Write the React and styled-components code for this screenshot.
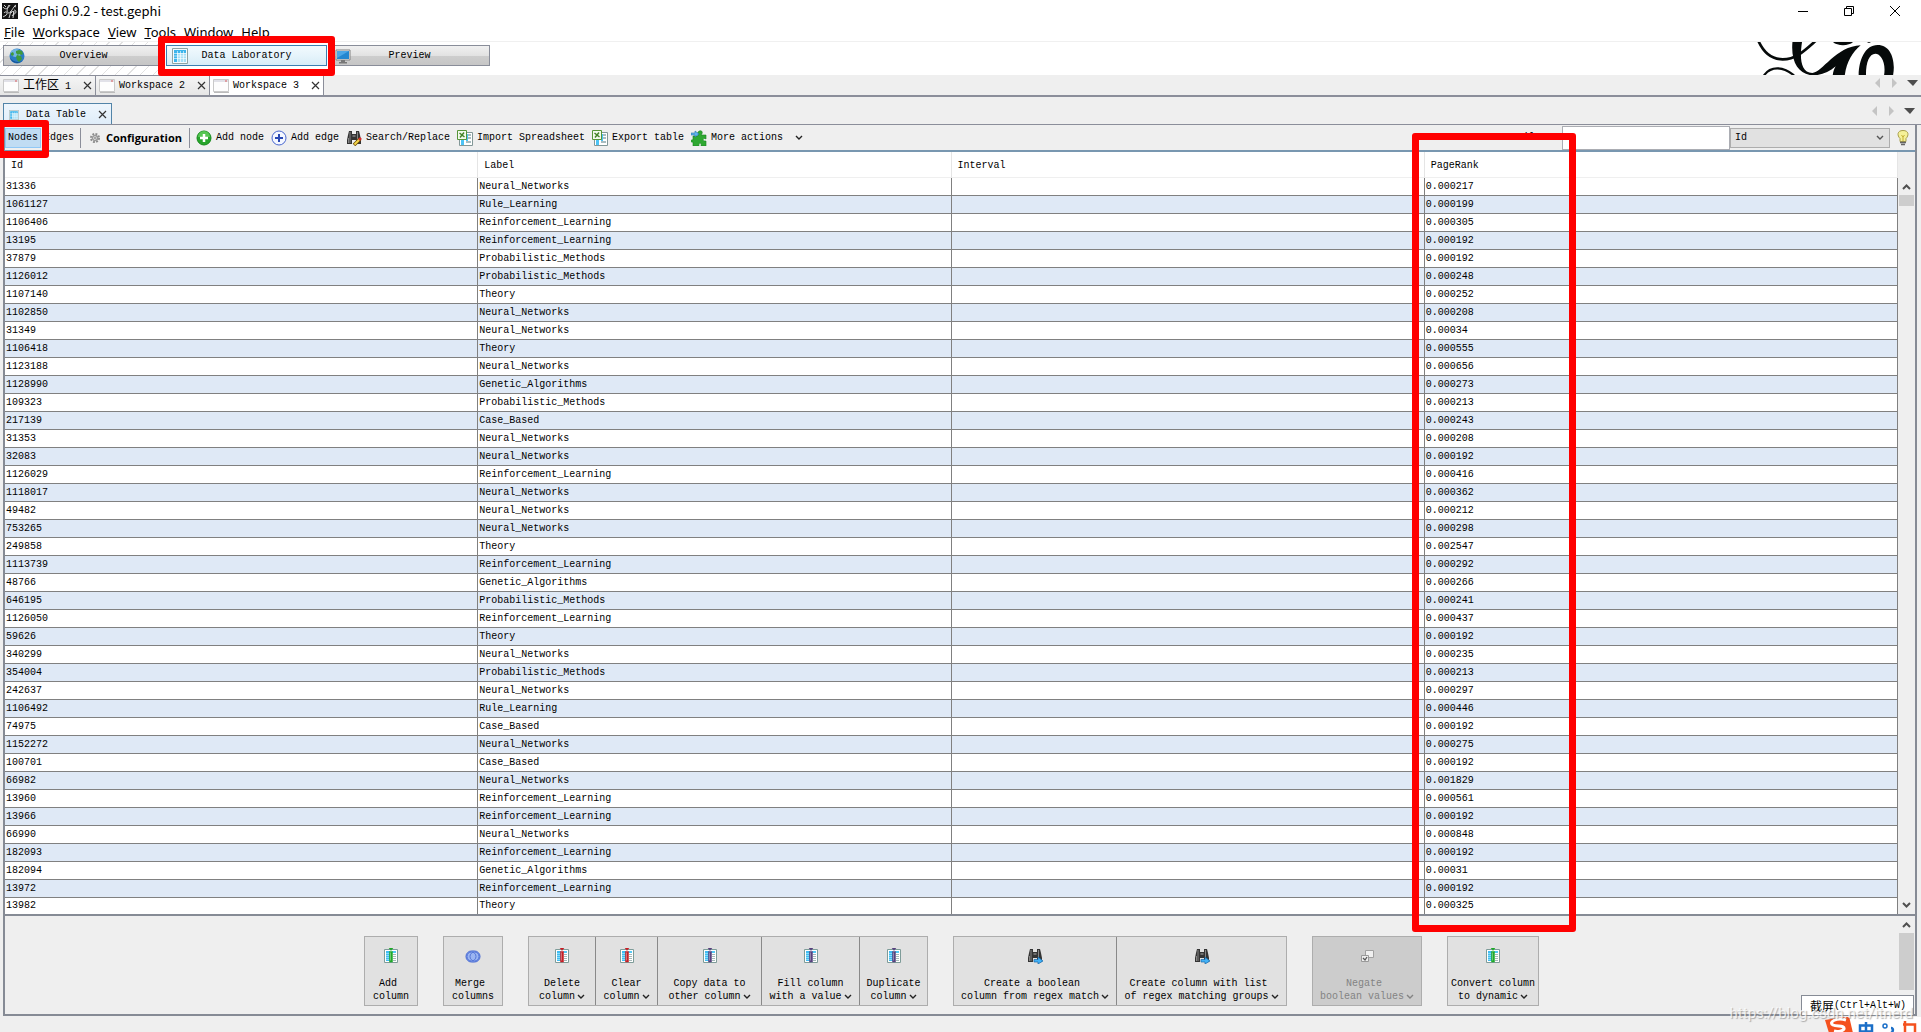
import React, { useState } from 'react';
import styled, { createGlobalStyle } from 'styled-components';

const MONO = `'Liberation Mono', 'Noto Sans CJK SC', monospace`;
const SANS = `'Noto Sans', 'Noto Sans CJK SC', sans-serif`;

const ROWS = [
    ['31336', 'Neural_Networks', '0.000217'],
    ['1061127', 'Rule_Learning', '0.000199'],
    ['1106406', 'Reinforcement_Learning', '0.000305'],
    ['13195', 'Reinforcement_Learning', '0.000192'],
    ['37879', 'Probabilistic_Methods', '0.000192'],
    ['1126012', 'Probabilistic_Methods', '0.000248'],
    ['1107140', 'Theory', '0.000252'],
    ['1102850', 'Neural_Networks', '0.000208'],
    ['31349', 'Neural_Networks', '0.00034'],
    ['1106418', 'Theory', '0.000555'],
    ['1123188', 'Neural_Networks', '0.000656'],
    ['1128990', 'Genetic_Algorithms', '0.000273'],
    ['109323', 'Probabilistic_Methods', '0.000213'],
    ['217139', 'Case_Based', '0.000243'],
    ['31353', 'Neural_Networks', '0.000208'],
    ['32083', 'Neural_Networks', '0.000192'],
    ['1126029', 'Reinforcement_Learning', '0.000416'],
    ['1118017', 'Neural_Networks', '0.000362'],
    ['49482', 'Neural_Networks', '0.000212'],
    ['753265', 'Neural_Networks', '0.000298'],
    ['249858', 'Theory', '0.002547'],
    ['1113739', 'Reinforcement_Learning', '0.000292'],
    ['48766', 'Genetic_Algorithms', '0.000266'],
    ['646195', 'Probabilistic_Methods', '0.000241'],
    ['1126050', 'Reinforcement_Learning', '0.000437'],
    ['59626', 'Theory', '0.000192'],
    ['340299', 'Neural_Networks', '0.000235'],
    ['354004', 'Probabilistic_Methods', '0.000213'],
    ['242637', 'Neural_Networks', '0.000297'],
    ['1106492', 'Rule_Learning', '0.000446'],
    ['74975', 'Case_Based', '0.000192'],
    ['1152272', 'Neural_Networks', '0.000275'],
    ['100701', 'Case_Based', '0.000192'],
    ['66982', 'Neural_Networks', '0.001829'],
    ['13960', 'Reinforcement_Learning', '0.000561'],
    ['13966', 'Reinforcement_Learning', '0.000192'],
    ['66990', 'Neural_Networks', '0.000848'],
    ['182093', 'Reinforcement_Learning', '0.000192'],
    ['182094', 'Genetic_Algorithms', '0.00031'],
    ['13972', 'Reinforcement_Learning', '0.000192'],
    ['13982', 'Theory', '0.000325'],
];

const MENU = ['File', 'Workspace', 'View', 'Tools', 'Window', 'Help'];

const GlobalStyle = createGlobalStyle`
    * {
        box-sizing: border-box;
    }
    body {
        margin: 0;
        background: #efefef;
        overflow: hidden;
    }
    button, input, select {
        font: inherit;
        color: inherit;
        margin: 0;
        padding: 0;
        border: 0;
        background: none;
        border-radius: 0;
    }
    svg {
        display: block;
        flex: none;
    }
`;

const Page = styled.div`
    position: relative;
    display: flex;
    flex-direction: column;
    min-height: 100vh;
    overflow: hidden;
    background: #efefef;
    color: #000;
    font: 10px/12px ${MONO};
    white-space: nowrap;
`;
const TitleBar = styled.header`
    display: flex;
    align-items: center;
    height: 24px;
    padding: 0 20px 2px 2px;
    gap: 5px;
    background: #fff;
    font: 13px/20px 'Noto Sans CJK SC', sans-serif;
`;
const WindowButtons = styled.div`
    display: flex;
    gap: 34px;
    margin-left: auto;
`;
const WindowButton = styled.button`
    width: 12px;
    height: 12px;
`;
const MenuBar = styled.nav`
    display: flex;
    gap: 8px;
    height: 18px;
    padding: 0 4px;
    border-bottom: 1px solid #f0f0f0;
    background: #fff;
    font: 13px/17px ${SANS};
`;
const MenuItem = styled.button`
    &::first-letter {
        text-decoration: underline;
    }
`;
const Banner = styled.div`
    display: flex;
    justify-content: space-between;
    height: 33px;
    padding-right: 27px;
    background: #fff;
`;
const Perspectives = styled.div`
    display: flex;
    gap: 2px;
    padding: 3px 3px 9px;
    background: repeating-linear-gradient(-45deg, #fff 0 8px, #e2e2e2 8px 9px) no-repeat 0 0 / 165px 100%;
`;
const Perspective = styled.button`
    display: grid;
    grid-template-columns: 16px 1fr 16px;
    align-items: center;
    width: 161px;
    padding: 0 5px;
    border: 1px solid ${({ $active }) => ($active ? '#3c7fb1' : '#898d99')};
    background: ${({ $active }) =>
        $active
            ? 'linear-gradient(#f2fafe, #e6f4fb 50%, #d8ecf6)'
            : 'linear-gradient(#f0f0f0, #e2e2e2 50%, #cdcdcd 51%, #c6c6c6)'};
`;
const TabStrip = styled.div`
    display: flex;
    height: ${({ $height }) => $height}px;
    border-bottom: ${({ $line }) => $line}px solid #8b8e9a;
    padding-right: ${({ $right }) => $right}px;
`;
const WorkspaceTab = styled.div`
    display: flex;
    align-items: center;
    gap: 4px;
    padding: 0 3px;
    border-top: 1px solid #8b8e9a;
    border-right: 1px solid #8b8e9a;
    background: ${({ $active }) => ($active ? '#fff' : 'linear-gradient(#f5f5f5, #e6e6e6)')};
`;
const PanelTab = styled.div`
    display: flex;
    align-items: center;
    gap: 7px;
    align-self: flex-end;
    height: 21px;
    margin-left: 3px;
    padding: 1px 4px 0 5px;
    border: 1px solid #5284a8;
    border-bottom: 0;
    background: linear-gradient(#eef6fd, #dfedf9);
`;
const Close = styled.button`
    width: 9px;
    height: 12px;
    margin-left: ${({ $gap }) => $gap}px;
`;
const Cjk = styled.span`
    font: 12px/12px 'Noto Sans CJK SC', sans-serif;
`;
const TabArrows = styled.div`
    margin-left: auto;
    padding-top: 2px;
`;
const DataPanel = styled.main`
    display: flex;
    flex-direction: column;
    margin: 0 4px 0 3px;
    border: solid #868b95;
    border-width: 0 2px 2px;
`;
const Toolbar = styled.div`
    display: flex;
    align-items: center;
    height: 27px;
    border-bottom: 2px solid #7897b0;
    padding: 1px 4px 0 0;
`;
const Toggle = styled.button`
    width: 36px;
    height: 20px;
    border: 1px solid ${({ $active }) => ($active ? '#90c8f6' : 'transparent')};
    background: ${({ $active }) => ($active ? '#c0dcf3' : 'none')};
`;
const Toggles = styled.div`
    display: flex;
`;
const Separator = styled.span`
    width: 1px;
    height: 20px;
    margin: 0 3px;
    background: #8b8e9a;
`;
const Tool = styled.button`
    display: flex;
    align-items: center;
    gap: 4px;
    padding: 0 4px 0 3px;
`;
const Configuration = styled(Tool)`
    gap: 6px;
    padding: 0 4px 0 6px;
    font: bold 11px/16px 'Open Sans', sans-serif;
`;
const MoreToggle = styled.button`
    margin-left: 8px;
`;
const FilterBar = styled.div`
    display: flex;
    align-items: center;
    margin-left: auto;
`;
const FilterLabel = styled.label`
    margin-right: 3px;
`;
const FilterInput = styled.input`
    width: 168px;
    height: 24px;
    border: 1px solid #abadb3;
    background: #fff;
`;
const FilterSelect = styled.select`
    width: 160px;
    height: 20px;
    padding-left: 4px;
    border: 1px solid #adadad;
    background: #e1e1e1;
    appearance: none;
`;
const SelectWrap = styled.div`
    display: grid;
    grid-template-columns: 1fr 20px;
    align-items: center;
    margin-right: 5px;

    ${FilterSelect} {
        grid-area: 1 / 1 / 2 / 3;
    }
    svg {
        grid-area: 1 / 2;
        justify-self: center;
        pointer-events: none;
    }
`;
const Scroller = styled.section`
    display: flex;
    border-bottom: ${({ $line }) => $line}px solid #868b95;
`;
const TableWrap = styled.div`
    flex: 1;
`;
const Table = styled.table`
    width: 100%;
    table-layout: fixed;
    border-collapse: separate;
    border-spacing: 0;
    text-align: left;
    background: #fff;
`;
const Head = styled.th`
    height: 26px;
    padding: 2px 0 0 6px;
    border-right: 1px solid #e5e5e5;
    border-bottom: 1px solid #efefef;
    font-weight: normal;
`;
const Row = styled.tr`
    &:nth-child(even) {
        background: #dfe9f6;
    }
    &:last-child td {
        height: 16px;
        border-bottom: 0;
    }
`;
const Cell = styled.td`
    height: 18px;
    padding: 0 0 0 1px;
    border-right: 1px solid #808080;
    border-bottom: 1px solid #808080;
`;
const ScrollBar = styled.div`
    display: flex;
    flex-direction: column;
    align-items: center;
    width: 17px;
    padding-top: ${({ $top }) => $top}px;
    background: #efefef;
`;
const ScrollButton = styled.button`
    display: grid;
    place-items: center;
    width: 15px;
    height: 17px;
    margin-top: ${({ $last }) => ($last ? 'auto' : 0)};
`;
const Thumb = styled.div`
    width: 15px;
    height: ${({ $size }) => $size}px;
    background: #cdcdcd;
`;
const Actions = styled.div`
    flex: 1;
    display: flex;
    justify-content: center;
    gap: 25px;
    padding: 20px 0 8px;
`;
const ActionGroup = styled.div`
    display: flex;
    border: 1px solid #adadad;
`;
const Action = styled.button`
    display: flex;
    flex-direction: column;
    align-items: center;
    width: ${({ $width }) => $width}px;
    height: 68px;
    padding-top: 11px;
    line-height: 13px;
    white-space: pre;
    background: #e1e1e1;

    & + & {
        border-left: 1px solid #898989;
    }
    &:disabled {
        background: #ccc;
        color: #838383;
    }
    svg {
        margin-bottom: 13px;
    }
`;
const LastLine = styled.span`
    display: flex;
    align-items: center;
    gap: 2px;

    svg {
        margin: 0;
    }
`;
const Marker = styled.div`
    position: absolute;
    left: ${({ $x }) => $x}px;
    top: ${({ $y }) => $y}px;
    width: ${({ $w }) => $w}px;
    height: ${({ $h }) => $h}px;
    border: 7px solid #f00;
    border-radius: 3px;
    pointer-events: none;
`;
const Tooltip = styled.div`
    position: absolute;
    right: 7px;
    top: 995px;
    display: flex;
    align-items: center;
    width: 113px;
    height: 21px;
    padding-left: 8px;
    border: 1px solid #868b95;
    background: #fff;
`;
const InputMethod = styled.div`
    position: absolute;
    right: 0;
    top: 1017px;
    display: flex;
    align-items: flex-start;
    width: 96px;
    height: 15px;
    overflow: hidden;
    background: linear-gradient(90deg, transparent 20px, #fff 20px);
`;
const Watermark = styled.div`
    position: absolute;
    right: 8px;
    top: 1004px;
    color: rgba(255, 255, 255, 0.75);
    font: 15px/18px Roboto, sans-serif;
    text-shadow: 1px 1px 1px rgba(120, 120, 120, 0.6);
    pointer-events: none;
`;

const Svg = ({ w = 16, h = w, box, children }) => (
    <svg width={w} height={h} viewBox={box || `0 0 ${w} ${h}`} fill="none" aria-hidden="true">
        {children}
    </svg>
);
const Chevron = ({ up, color = '#222' }) => (
    <Svg w={8} h={6}>
        <path d={up ? 'M1 5l3-3 3 3' : 'M1 1l3 3 3-3'} stroke={color} strokeWidth="1.4" />
    </Svg>
);
const ScrollChevron = ({ up }) => (
    <Svg w={9} h={7}>
        <path d={up ? 'M1 6l3.5-3.5L8 6' : 'M1 1l3.5 3.5L8 1'} stroke="#505050" strokeWidth="2" />
    </Svg>
);
const CloseIcon = () => (
    <Svg w={9}>
        <path d="M1 1l7 7M8 1L1 8" stroke="#333" strokeWidth="1.2" />
    </Svg>
);
const AppIcon = () => (
    <Svg>
        <path d="M0 0h16v16H0z" fill="#151515" />
        <path
            d="M1 4c2 3 5 2 7-2M7 2c-3 5-2 8 0 8s4-6 7-8M2 10c1-2 4-1 3 1s-3 2-4 3M9 8l-2 7M9 10c3-4 4 0 1 3M12 8l-1 7M12 7c3 0 2 4 0 4M2 2l2 2M12 3l2 1"
            stroke="#e6e6e6"
            strokeWidth=".9"
        />
    </Svg>
);
const Globe = () => (
    <Svg>
        <circle cx="8" cy="8" r="7.5" fill="#2b7cc4" />
        <ellipse cx="7" cy="5" rx="5.5" ry="4" fill="#86c3ea" opacity=".8" />
        <path d="M7 3l3-1 3 1 1 3-2 1-2-1-1 1-2-2z" fill="#3f9a3c" />
        <path d="M2 5l2-1 1 2-1 2-2-1zM8 7l4 1 1 3-3 3-2-2-1-3z" fill="#3f9a3c" />
        <path d="M1 10a7.500 7.500 0 0013 2c-3 3-9 3-13-2z" fill="#174f8f" />
    </Svg>
);
const Grid = ({ w = 16 }) => (
    <Svg w={w} box="0 0 16 16">
        <path d="M.5.5h15v15H.5z" fill="#f4fbfd" stroke="#8fa3a3" />
        <path d="M2 2h12v12H2z" fill="#a5def5" />
        <path d="M2 2h12v3H2zM2 5h3v9H2z" fill="#3db5ec" />
        <path d="M2 5.5h12M2 8h12M2 10.500h12M5.500 3v11M8.500 3v11M11.500 3v11" stroke="#fff" strokeWidth=".6" />
    </Svg>
);
const Monitor = () => (
    <Svg>
        <path d="M1 2h14v10H1z" fill="#f3f3f3" stroke="#828282" />
        <path d="M2 3h12v8H2z" fill="#2487d0" />
        <path d="M2 3h12L2 10z" fill="#4ba6e6" />
        <path d="M6 12h4v2h2v1.500H4V14h2z" fill="#777" />
    </Svg>
);
const Sheet = () => (
    <Svg>
        <path d="M.5 1.500h15v12H.5z" fill="#fdfdfd" stroke="#c9c9c9" />
        <path d="M1 2h14v2H1z" fill="#e1e1e8" />
        <path d="M12 2.500h2v1h-2z" fill="#dc5b5b" />
        <path d="M1 14.500h15" stroke="#bbb" />
    </Svg>
);
const Gear = () => (
    <Svg w={10} box="0 0 16 16">
        <circle cx="8" cy="8" r="6.500" stroke="#8b8b8b" strokeWidth="3" strokeDasharray="3 2.100" />
        <circle cx="8" cy="8" r="4" fill="#e8e8e8" stroke="#9a9a9a" strokeWidth="2.500" />
        <circle cx="8" cy="8" r="1.500" fill="#888" />
    </Svg>
);
const Plus = ({ blue }) => (
    <Svg>
        <circle cx="8" cy="8" r="7" fill={blue ? '#f4f7ff' : '#27a52b'} stroke={blue ? '#4a68d0' : '#168a1b'} />
        {!blue && <path d="M2 7a6 6 0 0112 0z" fill="#57c653" />}
        <path d="M8 4v8M4 8h8" stroke={blue ? '#2948b4' : '#fff'} strokeWidth={blue ? 2 : 2.5} />
    </Svg>
);
const Binoculars = ({ pencil }) => (
    <Svg>
        <path d="M3 1h3v3h4V1h3l1 4 1 5v4h-5v-4H6v4H1v-4l1-5z" fill="#343434" />
        <path d="M4 2v11M11.500 2v9M2.500 8v5" stroke="#858585" />
        <path d="M6.500 6h3" stroke="#aaa" />
        {pencil ? (
            <>
                <path d="M8 15l6-6" stroke="#6b4d00" strokeWidth="3.500" />
                <path d="M8.500 14.500l5-5" stroke="#f7d64a" strokeWidth="2" />
                <path d="M13 10l2-2" stroke="#d52b2b" strokeWidth="2.500" />
            </>
        ) : (
            <path d="M7 11.500h4V9l5 4-5 3v-2H7z" fill="#42b2f7" stroke="#1765a8" strokeWidth=".7" />
        )}
    </Svg>
);
const Excel = () => (
    <Svg>
        <path d="M2.500 2.500h13v13h-13z" fill="#fff" stroke="#829797" />
        <path d="M10 4h4v2h-4zM10 7h4v2h-4zM9 11h5v2H9z" fill="#a8bcbf" />
        <path d="M4 10h3v5H4zM9 4h2v7H9z" fill="#4cc3f5" />
        <path d="M.5.500h9v9h-9z" fill="#f3faed" stroke="#569537" />
        <path d="M2.500 3l5 4M7 2.500L3 7.500" stroke="#438327" strokeWidth="1.500" />
    </Svg>
);
const Puzzle = () => (
    <Svg>
        <path
            d="M7 2c3-3 6 0 3 3h5v4c-3-2-4 2-1 2h1v5h-5c1-4-3-3-2 0H2v-4c-3 1-3-3 0-2V6h5c0-1-1-2 0-4z"
            fill="#2fa832"
            stroke="#16841c"
            strokeWidth=".6"
        />
        <path d="M0 3h4V1l4 3-4 3V5H0z" fill="#5fb4ed" stroke="#2870a7" strokeWidth=".6" />
    </Svg>
);
const Bulb = () => (
    <Svg>
        <path d="M8 .5c6 0 6 5 3 8v3H5v-3C2 5.500 2 .5 8 .5z" fill="#f5f199" stroke="#a79d49" />
        <path d="M6.500 5l1.500 2 1.500-2M8 7v4" stroke="#c3ae32" />
        <path d="M5 12.500h6M6 14.500h4" stroke="#666" strokeWidth="1.500" />
    </Svg>
);
const ColumnIcon = ({ color }) => (
    <Svg>
        <path d="M1.500 1.500h13v13h-13z" fill="#fff" stroke="#7e9c99" />
        <path d="M3 3h4v10H3z" fill="#41bdf3" />
        <path d="M9 3h4v2H9z" fill="#55c9f5" />
        <path d="M10 6.500h3M10 8.500h3M10 10.500h3M10 12.500h3" stroke="#a4b8b8" />
        <path d="M3 5.500h3M3 7.500h3M3 9.500h3M3 11.500h3" stroke="#8bdcf8" />
        <path d="M6 0h4L8 2.500zM6.500 3.500h3V14h-3z" fill={color} stroke={color} strokeWidth=".5" />
        <path d="M7.500 4.500v8" stroke="#fff" opacity=".35" />
    </Svg>
);
const Merge = () => (
    <Svg>
        <rect x="1" y="3" width="14" height="11" rx="5.500" fill="#9bb5f2" stroke="#3e62d2" />
        <circle cx="6.500" cy="8.500" r="4.500" stroke="#5575d7" />
        <circle cx="9.500" cy="8.500" r="4.500" stroke="#5575d7" />
    </Svg>
);
const Checks = () => (
    <Svg>
        <path d="M6.500 2.500h8v7h-8z" fill="#f0f0f0" stroke="#a0a0a0" />
        <path d="M2.500 7.500h7v6h-7z" fill="#eee" stroke="#999" />
        <path d="M4 10l2 2 2-3" stroke="#555" strokeWidth="1.300" />
    </Svg>
);
const NavArrows = () => (
    <Svg w={44} h={12}>
        <path d="M6 1v10L1 6zM18 1v10l5-5z" fill="#c4c4c4" />
        <path d="M33 3h11l-5 6z" fill="#4e4e4e" />
    </Svg>
);
const Flourish = () => (
    <Svg w={138} h={33} box="170 36 414 99">
        <path d="M176 30c18 42 45 58 74 58 42 0 70-30 104-60" stroke="#060a0a" strokeWidth="8" />
        <path d="M194 136c20-28 56-28 90 0" stroke="#060a0a" strokeWidth="7" />
        <path
            d="M280 30h29c-8 48-8 97 30 99 28 0 72-81 145-83-26 22-42 50-48 92h-36c1-12 4-20 9-29-20 18-43 27-69 27-42-2-68-40-60-106z"
            fill="#060a0a"
        />
        <path d="M478 137c0-45 18-92 57-92s55 45 46 92h-27c7-41-10-66-26-66-19 0-29 29-28 66z" fill="#060a0a" />
        <path d="M400 35c12 14 50 14 62 0zM500 35h17l-8 4z" fill="#060a0a" />
    </Svg>
);

const GREEN = '#1fa929';
const RED = '#c41f24';
const PURPLE = '#57427e';

const ACTIONS = [
    [{ width: 52, icon: <ColumnIcon color={GREEN} />, lines: ['Add ', 'column'] }],
    [{ width: 58, icon: <Merge />, lines: ['Merge ', 'columns'] }],
    [
        { width: 66, icon: <ColumnIcon color={RED} />, lines: ['Delete', 'column'], menu: true },
        { width: 62, icon: <ColumnIcon color={RED} />, lines: ['Clear', 'column'], menu: true },
        { width: 104, icon: <ColumnIcon color={PURPLE} />, lines: ['Copy data to', 'other column'], menu: true },
        { width: 98, icon: <ColumnIcon color={PURPLE} />, lines: ['Fill column', 'with a value'], menu: true },
        { width: 68, icon: <ColumnIcon color={PURPLE} />, lines: ['Duplicate', 'column'], menu: true },
    ],
    [
        { width: 162, icon: <Binoculars />, lines: ['Create a boolean ', 'column from regex match'], menu: true },
        { width: 170, icon: <Binoculars />, lines: ['Create column with list ', 'of regex matching groups'], menu: true },
    ],
    [{ width: 108, icon: <Checks />, lines: ['Negate ', 'boolean values'], menu: true, disabled: true }],
    [{ width: 90, icon: <ColumnIcon color={GREEN} />, lines: ['Convert column', 'to dynamic'], menu: true }],
];

const TOOLS = [
    { icon: <Plus />, label: 'Add node' },
    { icon: <Plus blue />, label: 'Add edge' },
    { icon: <Binoculars pencil />, label: 'Search/Replace' },
    { icon: <Excel />, label: 'Import Spreadsheet' },
    { icon: <Excel />, label: 'Export table' },
    { icon: <Puzzle />, label: 'More actions' },
];

const App = () => {
    const [mode, setMode] = useState('Nodes');
    const [filter, setFilter] = useState('');

    return (
        <Page>
            <GlobalStyle />
            <TitleBar>
                <AppIcon />
                <span>Gephi 0.9.2 - test.gephi</span>
                <WindowButtons>
                    <WindowButton aria-label="Minimize">
                        <Svg w={12}>
                            <path d="M1 6.500h10" stroke="#000" />
                        </Svg>
                    </WindowButton>
                    <WindowButton aria-label="Restore">
                        <Svg w={12}>
                            <path d="M1.500 3.500h7v7h-7zM3.500 3V1.500h7v7H9" stroke="#000" />
                        </Svg>
                    </WindowButton>
                    <WindowButton aria-label="Close">
                        <Svg w={12}>
                            <path d="M1 1l10 10M11 1L1 11" stroke="#000" />
                        </Svg>
                    </WindowButton>
                </WindowButtons>
            </TitleBar>
            <MenuBar>
                {MENU.map((item) => (
                    <MenuItem key={item}>{item}</MenuItem>
                ))}
            </MenuBar>
            <Banner>
                <Perspectives>
                    <Perspective>
                        <Globe />
                        Overview
                    </Perspective>
                    <Perspective $active>
                        <Grid />
                        Data Laboratory
                    </Perspective>
                    <Perspective>
                        <Monitor />
                        Preview
                    </Perspective>
                </Perspectives>
                <Flourish />
            </Banner>
            <TabStrip $height={22} $line={2} $right={3}>
                <WorkspaceTab>
                    <Sheet />
                    <span>
                        <Cjk>工作区</Cjk> 1
                    </span>
                    <Close $gap={8} aria-label="Close workspace">
                        <CloseIcon />
                    </Close>
                </WorkspaceTab>
                <WorkspaceTab>
                    <Sheet />
                    Workspace 2
                    <Close $gap={8} aria-label="Close workspace">
                        <CloseIcon />
                    </Close>
                </WorkspaceTab>
                <WorkspaceTab $active>
                    <Sheet />
                    Workspace 3
                    <Close $gap={8} aria-label="Close workspace">
                        <CloseIcon />
                    </Close>
                </WorkspaceTab>
                <TabArrows>
                    <NavArrows />
                </TabArrows>
            </TabStrip>
            <TabStrip $height={28} $line={1} $right={6}>
                <PanelTab>
                    <Grid w={10} />
                    Data Table
                    <Close $gap={5} aria-label="Close table">
                        <CloseIcon />
                    </Close>
                </PanelTab>
                <TabArrows>
                    <Svg w={1} h={6} />
                    <NavArrows />
                </TabArrows>
            </TabStrip>
            <DataPanel>
                <Toolbar>
                    <Toggles>
                        {['Nodes', 'Edges'].map((name) => (
                            <Toggle key={name} $active={mode === name} onClick={() => setMode(name)}>
                                {name}
                            </Toggle>
                        ))}
                    </Toggles>
                    <Separator />
                    <Configuration>
                        <Gear />
                        Configuration
                    </Configuration>
                    <Separator />
                    {TOOLS.map((tool) => (
                        <Tool key={tool.label}>
                            {tool.icon}
                            {tool.label}
                        </Tool>
                    ))}
                    <MoreToggle aria-label="Open more actions">
                        <Chevron />
                    </MoreToggle>
                    <FilterBar>
                        <FilterLabel htmlFor="filter">Filter:</FilterLabel>
                        <FilterInput id="filter" value={filter} onChange={(e) => setFilter(e.target.value)} />
                        <SelectWrap>
                            <FilterSelect aria-label="Filter column">
                                <option>Id</option>
                                <option>Label</option>
                                <option>Interval</option>
                                <option>PageRank</option>
                            </FilterSelect>
                            <Chevron color="#555" />
                        </SelectWrap>
                        <Bulb />
                    </FilterBar>
                </Toolbar>
                <Scroller $line={2}>
                    <TableWrap>
                        <Table>
                            <thead>
                                <tr>
                                    <Head>Id</Head>
                                    <Head>Label</Head>
                                    <Head>Interval</Head>
                                    <Head>PageRank</Head>
                                </tr>
                            </thead>
                            <tbody>
                                {ROWS.map(([id, label, rank]) => (
                                    <Row key={id}>
                                        <Cell>{id}</Cell>
                                        <Cell>{label}</Cell>
                                        <Cell />
                                        <Cell>{rank}</Cell>
                                    </Row>
                                ))}
                            </tbody>
                        </Table>
                    </TableWrap>
                    <ScrollBar $top={26}>
                        <ScrollButton aria-label="Scroll up">
                            <ScrollChevron up />
                        </ScrollButton>
                        <Thumb $size={11} />
                        <ScrollButton $last aria-label="Scroll down">
                            <ScrollChevron />
                        </ScrollButton>
                    </ScrollBar>
                </Scroller>
                <Scroller $line={0}>
                    <Actions>
                        {ACTIONS.map((group, i) => (
                            <ActionGroup key={i}>
                                {group.map(({ width, icon, lines, menu, disabled }) => (
                                    <Action key={lines.join('')} $width={width} disabled={disabled}>
                                        {icon}
                                        <span>{lines[0]}</span>
                                        <LastLine>
                                            {lines[1]}
                                            {menu && <Chevron color={disabled ? '#838383' : '#222'} />}
                                        </LastLine>
                                    </Action>
                                ))}
                            </ActionGroup>
                        ))}
                    </Actions>
                    <ScrollBar $top={0}>
                        <ScrollButton aria-label="Scroll up">
                            <ScrollChevron up />
                        </ScrollButton>
                        <Thumb $size={57} />
                    </ScrollBar>
                </Scroller>
            </DataPanel>
            <Tooltip>
                <Cjk>截屏</Cjk>(Ctrl+Alt+W)
            </Tooltip>
            <InputMethod>
                <Svg w={96} h={15}>
                    <path d="M0 3L24-1l4 17H4z" fill="#f4511e" />
                    <path d="M21 3C12 0 3 5 8 8c4 2 12 0 11 4-1 2-6 3-10 2" stroke="#fff" strokeWidth="3" />
                    <path d="M35 8.500h12v6H35zM41 5v11" stroke="#1b6fc8" strokeWidth="2.500" />
                    <circle cx="60" cy="9" r="2" stroke="#1b6fc8" strokeWidth="1.500" />
                    <path d="M66 11c3 0 2 4 0 5" stroke="#1b6fc8" strokeWidth="2.500" />
                    <path d="M78 7.500h12V16M80 4v11" stroke="#f4511e" strokeWidth="2.500" />
                </Svg>
            </InputMethod>
            <Watermark>https://blog.csdn.net/itnerd</Watermark>
            <Marker $x={158} $y={36} $w={177} $h={40} />
            <Marker $x={-3} $y={120} $w={52} $h={38} />
            <Marker $x={1412} $y={133} $w={164} $h={799} />
        </Page>
    );
};

export default App;
